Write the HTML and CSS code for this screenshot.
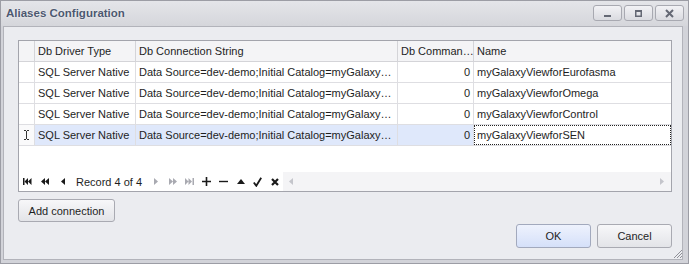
FILE: index.html
```html
<!DOCTYPE html>
<html lang="en">

<head>
    <meta charset="UTF-8">
    <title>Aliases Configuration</title>
    <link rel="stylesheet" href="styles.css">
</head>

<body>
    <div class="window">
        <div class="titlebar">
            <span class="caption">Aliases Configuration</span>
            <div class="caption-buttons">
                <span class="cap-btn">
                    <svg width="9" height="9" viewBox="0 0 9 9"><rect x="1" y="6" width="7" height="2" fill="#646874"/></svg>
                </span>
                <span class="cap-btn">
                    <svg width="9" height="9" viewBox="0 0 9 9"><path d="M1 1h7v7H1z M2.5 3v3.5h4V3z" fill="#646874" fill-rule="evenodd"/></svg>
                </span>
                <span class="cap-btn">
                    <svg width="9" height="9" viewBox="0 0 9 9"><path d="M1 1l7 7M8 1L1 8" stroke="#646874" stroke-width="2"/></svg>
                </span>
            </div>
        </div>

        <div class="client">
            <div class="grid">
                <div class="row header">
                    <div class="cell ind"></div>
                    <div class="cell">Db Driver Type</div>
                    <div class="cell">Db Connection String</div>
                    <div class="cell">Db Comman…</div>
                    <div class="cell">Name</div>
                </div>
                <div class="row">
                    <div class="cell ind"></div>
                    <div class="cell">SQL Server Native</div>
                    <div class="cell">Data Source=dev-demo;Initial Catalog=myGalaxy…</div>
                    <div class="cell num">0</div>
                    <div class="cell">myGalaxyViewforEurofasma</div>
                </div>
                <div class="row">
                    <div class="cell ind"></div>
                    <div class="cell">SQL Server Native</div>
                    <div class="cell">Data Source=dev-demo;Initial Catalog=myGalaxy…</div>
                    <div class="cell num">0</div>
                    <div class="cell">myGalaxyViewforOmega</div>
                </div>
                <div class="row">
                    <div class="cell ind"></div>
                    <div class="cell">SQL Server Native</div>
                    <div class="cell">Data Source=dev-demo;Initial Catalog=myGalaxy…</div>
                    <div class="cell num">0</div>
                    <div class="cell">myGalaxyViewforControl</div>
                </div>
                <div class="row selected">
                    <div class="cell ind">
                        <svg width="7" height="10" viewBox="0 0 7 10"><path d="M1 0.5h2M4 0.5h2M3.5 1v8M1 9.5h2M4 9.5h2" stroke="#333" stroke-width="1" fill="none"/></svg>
                    </div>
                    <div class="cell">SQL Server Native</div>
                    <div class="cell">Data Source=dev-demo;Initial Catalog=myGalaxy…</div>
                    <div class="cell num">0</div>
                    <div class="cell focused">myGalaxyViewforSEN</div>
                </div>
                <div class="filler"></div>
                <div class="navigator">
                    <span class="nav-btn">
                        <svg width="9" height="7" viewBox="0 0 9 7"><rect x="0" y="0" width="1.5" height="7"/><path d="M1.5 3.5L5 0v7z M5 3.5L8.5 0v7z"/></svg>
                    </span>
                    <span class="nav-btn">
                        <svg width="8" height="7" viewBox="0 0 8 7"><path d="M0 3.5L4 0v7z M4 3.5L8 0v7z"/></svg>
                    </span>
                    <span class="nav-btn shift">
                        <svg width="4" height="7" viewBox="0 0 4 7"><path d="M0 3.5L4 0v7z"/></svg>
                    </span>
                    <span class="nav-text">Record 4 of 4</span>
                    <span class="nav-btn off">
                        <svg width="4" height="7" viewBox="0 0 4 7"><path d="M4 3.5L0 0v7z"/></svg>
                    </span>
                    <span class="nav-btn off">
                        <svg width="8" height="7" viewBox="0 0 8 7"><path d="M4 3.5L0 0v7z M8 3.5L4 0v7z"/></svg>
                    </span>
                    <span class="nav-btn off">
                        <svg width="9" height="7" viewBox="0 0 9 7"><path d="M3.5 3.5L0 0v7z M7 3.5L3.5 0v7z"/><rect x="7.5" y="0" width="1.5" height="7"/></svg>
                    </span>
                    <span class="nav-btn">
                        <svg width="9" height="9" viewBox="0 0 9 9"><path d="M0 4.5h9M4.5 0v9" stroke="#1a1a1a" stroke-width="1.6"/></svg>
                    </span>
                    <span class="nav-btn">
                        <svg width="9" height="9" viewBox="0 0 9 9"><path d="M0 4.5h9" stroke="#1a1a1a" stroke-width="1.4"/></svg>
                    </span>
                    <span class="nav-btn">
                        <svg width="8" height="5" viewBox="0 0 8 5"><path d="M4 0L8 5H0z"/></svg>
                    </span>
                    <span class="nav-btn">
                        <svg width="9" height="10" viewBox="0 0 9 10"><path d="M0.8 5.5L3.3 8.8L8.2 0.8" stroke="#1a1a1a" stroke-width="1.8" fill="none"/></svg>
                    </span>
                    <span class="nav-btn">
                        <svg width="8" height="8" viewBox="0 0 8 8"><path d="M1 1l6 6M7 1L1 7" stroke="#1a1a1a" stroke-width="2.2"/></svg>
                    </span>
                    <div class="hscroll">
                        <svg width="4" height="7" viewBox="0 0 4 7"><path d="M0 3.5L4 0v7z" fill="#c4c5cb"/></svg>
                        <svg width="4" height="7" viewBox="0 0 4 7"><path d="M4 3.5L0 0v7z" fill="#c4c5cb"/></svg>
                    </div>
                </div>
            </div>

            <div class="actions">
                <button class="btn add">Add connection</button>
            </div>

            <div class="footer">
                <button class="btn ok">OK</button>
                <button class="btn">Cancel</button>
            </div>
        </div>

        <svg class="grip" width="10" height="10" viewBox="0 0 10 10">
            <path d="M9 1L1 9M9 4L4 9M9 7L7 9" stroke="#8f9098" stroke-width="1"/>
        </svg>
    </div>
</body>

</html>
```

FILE: styles.css
```css
body {
    margin: 0;
    font-family: "Liberation Sans", Arial, sans-serif;
    font-size: 11px;
    color: #1e1e1e;
}

.window {
    position: relative;
    width: 689px;
    height: 264px;
    box-sizing: border-box;
    border: 1px solid #9c9da5;
    background: #d2d3d9;
    display: flex;
    flex-direction: column;
}

.titlebar {
    height: 25px;
    flex: none;
    display: flex;
    justify-content: space-between;
    align-items: flex-start;
    padding: 0 4px 0 5px;
    background: linear-gradient(#e4e5e9, #d5d6db);
}

.caption {
    margin-top: 6px;
    font-weight: bold;
    font-size: 11.5px;
    color: #4c5870;
    text-shadow: 0 0 2px rgba(255, 255, 255, 0.9);
}

.caption-buttons {
    display: flex;
    gap: 2px;
    margin-top: 4px;
}

.cap-btn {
    width: 29px;
    height: 16px;
    box-sizing: border-box;
    border: 1px solid #a8a9b1;
    border-radius: 3px;
    background: linear-gradient(#f2f2f5, #dadbe0);
    display: flex;
    align-items: center;
    justify-content: center;
}

.client {
    flex: 1;
    margin: 0 5px 3px 2px;
    border: 1px solid #b2b3ba;
    background: #ebecf0;
    padding: 13px 10px 11px 14px;
    display: flex;
    flex-direction: column;
}

.grid {
    height: 152px;
    box-sizing: border-box;
    border: 1px solid #a3a4ac;
    background: #fff;
    display: flex;
    flex-direction: column;
}

.row {
    display: grid;
    grid-template-columns: 16px 101px 262px 76px 1fr;
    height: 21px;
    box-sizing: border-box;
    border-bottom: 1px solid #dedee2;
}

.row.header {
    background: #f4f4f6;
    border-bottom-color: #d4d4d8;
}

.cell {
    border-right: 1px solid #dedee2;
    padding: 0 3px;
    line-height: 20px;
    white-space: nowrap;
    overflow: hidden;
}

.header .cell {
    border-right-color: #d4d4d8;
}

.cell:last-child {
    border-right: none;
}

.cell.num {
    text-align: right;
}

.cell.ind {
    padding: 0;
    display: flex;
    align-items: center;
    justify-content: center;
}

.selected .cell {
    background: #dfe8fb;
}

.selected .cell.ind {
    background: #fafafb;
}

.selected .cell.focused {
    background: #fff;
    outline: 1px dotted #222;
    outline-offset: -1px;
}

.filler {
    flex: 1;
}

.navigator {
    height: 19px;
    display: flex;
    align-items: center;
}

.nav-btn {
    width: 17px;
    height: 19px;
    display: flex;
    align-items: center;
    justify-content: center;
    fill: #1a1a1a;
}

.nav-btn.shift {
    padding-left: 2px;
    width: 15px;
}

.nav-btn.off {
    fill: #a9aab1;
}

.nav-text {
    width: 71px;
    margin-left: 6px;
    font-size: 11px;
}

.hscroll {
    flex: 1;
    height: 19px;
    background: #f4f4f6;
    display: flex;
    align-items: center;
    justify-content: space-between;
    padding: 0 7px 0 6px;
}

.actions {
    margin-top: 7px;
}

.btn {
    font-family: "Liberation Sans", Arial, sans-serif;
    font-size: 11px;
    color: #1e1e1e;
    height: 23px;
    border: 1px solid #a9aab2;
    border-radius: 3px;
    background: linear-gradient(#f7f7f9, #e3e4e8);
    padding: 0;
}

.btn.add {
    width: 97px;
}

.footer {
    margin-top: 2px;
    display: flex;
    justify-content: flex-end;
    gap: 6px;
}

.footer .btn {
    width: 75px;
    height: 24px;
}

.btn.ok {
    border-color: #a2a9bd;
    background: linear-gradient(#eef2fd, #d5e0f9);
}

.grip {
    position: absolute;
    right: 5px;
    bottom: 4px;
}
```
